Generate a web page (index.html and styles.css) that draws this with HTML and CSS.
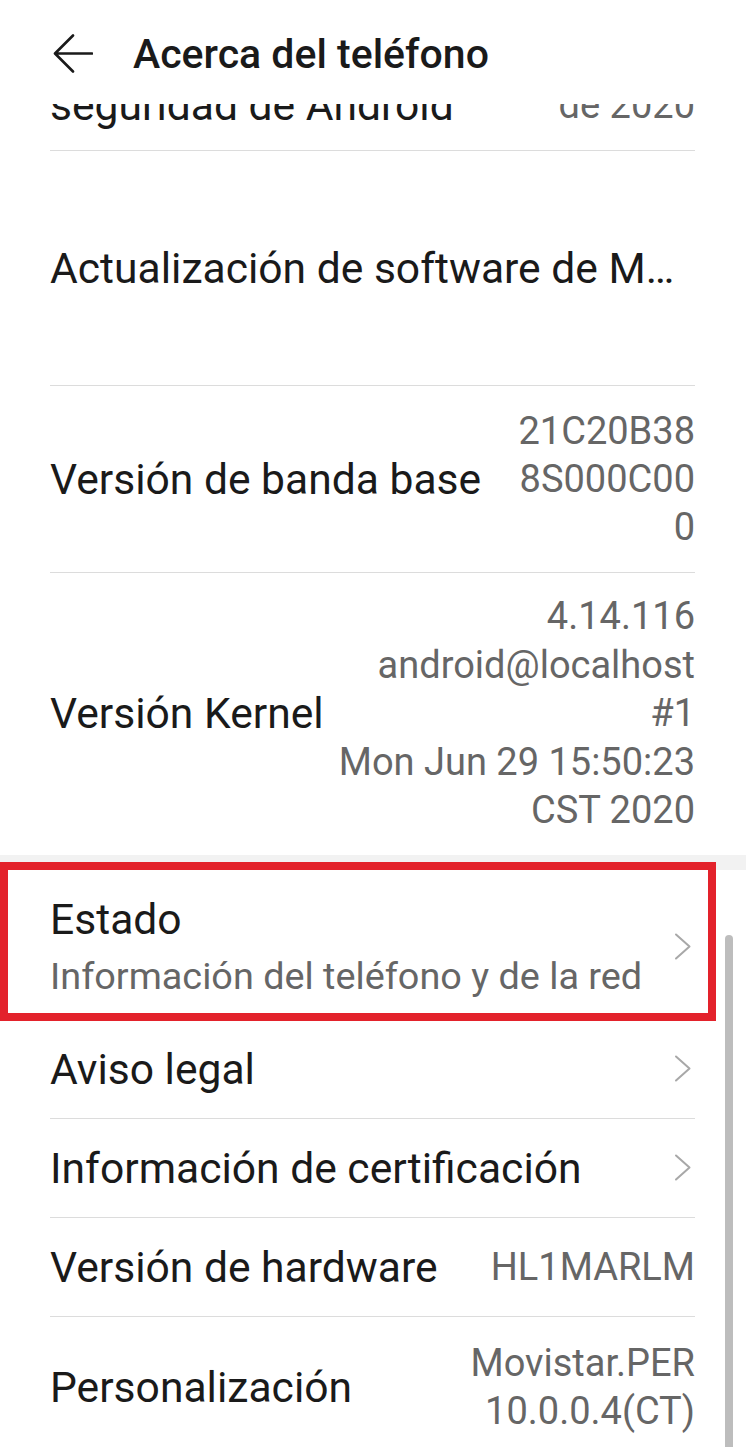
FILE: index.html
```html
<!DOCTYPE html>
<html lang="es">
<head>
<meta charset="utf-8">
<title>Acerca del teléfono</title>
<link rel="stylesheet" href="styles.css">
</head>
<body>
<div class="screen">
  <header class="appbar">
    <svg class="back" width="40" height="40" viewBox="0 0 40 40" aria-hidden="true">
      <path d="M39 19.5H2.5M20 1.5L2 19.5L20 37.5" fill="none" stroke="#1a1a1a" stroke-width="2.6" stroke-linecap="round" stroke-linejoin="round"/>
    </svg>
    <h1 class="title">Acerca del teléfono</h1>
  </header>
  <main class="list">
    <div class="scroller">
      <section class="group">
        <div class="row row-clipped">
          <span class="label">seguridad de Android</span>
          <span class="value">de 2020</span>
        </div>
        <div class="row row-tall">
          <span class="label">Actualización de software de M…</span>
        </div>
        <div class="row row-multi">
          <span class="label">Versión de banda base</span>
          <span class="value">21C20B38<br>8S000C00<br>0</span>
        </div>
        <div class="row row-kernel">
          <span class="label">Versión Kernel</span>
          <span class="value value-kernel">4.14.116<br>android@localhost<br>#1<br>Mon Jun 29 15:50:23<br>CST 2020</span>
        </div>
      </section>
      <section class="group">
        <div class="row row-status">
          <div class="text-stack">
            <span class="label">Estado</span>
            <span class="subtitle">Información del teléfono y de la red</span>
          </div>
          <svg class="chevron" width="19" height="27" viewBox="0 0 19 27" aria-hidden="true"><path d="M2 1.5L15.5 13.5L2 25.5" fill="none" stroke="#a8a8a8" stroke-width="2" stroke-linecap="round" stroke-linejoin="round"/></svg>
        </div>
        <div class="row">
          <span class="label">Aviso legal</span>
          <svg class="chevron" width="19" height="27" viewBox="0 0 19 27" aria-hidden="true"><path d="M2 1.5L15.5 13.5L2 25.5" fill="none" stroke="#a8a8a8" stroke-width="2" stroke-linecap="round" stroke-linejoin="round"/></svg>
        </div>
        <div class="row">
          <span class="label">Información de certificación</span>
          <svg class="chevron" width="19" height="27" viewBox="0 0 19 27" aria-hidden="true"><path d="M2 1.5L15.5 13.5L2 25.5" fill="none" stroke="#a8a8a8" stroke-width="2" stroke-linecap="round" stroke-linejoin="round"/></svg>
        </div>
        <div class="row">
          <span class="label">Versión de hardware</span>
          <span class="value">HL1MARLM</span>
        </div>
        <div class="row row-custom">
          <span class="label">Personalización</span>
          <span class="value">Movistar.PER<br>10.0.0.4(CT)</span>
        </div>
      </section>
    </div>
  </main>
  <div class="scrollbar"></div>
  <div class="highlight"></div>
</div>
</body>
</html>
```
FILE: styles.css
```css
* { box-sizing: border-box; }
html, body { margin: 0; padding: 0; background: #fff; }
body {
  font-family: Roboto, "Noto Sans", "Liberation Sans", sans-serif;
  color: #1a1a1a;
}
.screen {
  position: relative;
  width: 746px;
  height: 1447px;
  overflow: hidden;
  display: flex;
  flex-direction: column;
  background: #fff;
}
.appbar {
  flex: 0 0 104px;
  display: flex;
  align-items: flex-start;
  padding: 34px 0 0 53px;
  background: #fff;
  position: relative;
  z-index: 1;
}
.back { flex: 0 0 auto; }
.title {
  margin: -3px 0 0 40px;
  font-size: 41px;
  font-weight: 500;
  line-height: 46px;
  letter-spacing: 0;
  white-space: nowrap;
  color: #1a1a1a;
}
.list {
  flex: 1 1 auto;
  overflow: hidden;
  background: #f2f2f2;
}
.scroller { margin-top: -48px; }
.group { background: #fff; }
.group + .group { margin-top: 15px; }
.row {
  margin: 0 51px 0 50px;
  padding: 24px 0;
  display: flex;
  align-items: center;
  justify-content: space-between;
  gap: 14px;
  border-bottom: 1px solid #dcdcdc;
}
.row:last-child { border-bottom: none; }
.label {
  font-size: 42.6px;
  line-height: 50px;
  color: #1a1a1a;
  white-space: nowrap;
}
.value {
  font-size: 38px;
  line-height: 48px;
  color: #666;
  text-align: right;
  white-space: nowrap;
}
.value-kernel { line-height: 48.6px; }
.row-clipped { padding: 24px 0 20px; }
.row-tall { min-height: 235px; }
.row-multi { padding: 21px 0; }
.row-kernel { padding: 19px 0 20px; }
.row-status { padding: 24px 0 19px; }
.row-custom { padding: 22px 0; }
.text-stack {
  display: flex;
  flex-direction: column;
  gap: 8px;
}
.subtitle {
  font-size: 37.8px;
  line-height: 48px;
  color: #666;
  white-space: nowrap;
}
.chevron { flex: 0 0 auto; margin-right: 2px; }
.scrollbar {
  position: absolute;
  left: 725px;
  top: 935px;
  width: 8px;
  bottom: 0;
  border-radius: 4px 4px 0 0;
  background: #bdbdbd;
}
.highlight {
  position: absolute;
  left: 0;
  top: 862px;
  width: 716px;
  height: 159px;
  border: 8px solid #e3222b;
  pointer-events: none;
}
```
